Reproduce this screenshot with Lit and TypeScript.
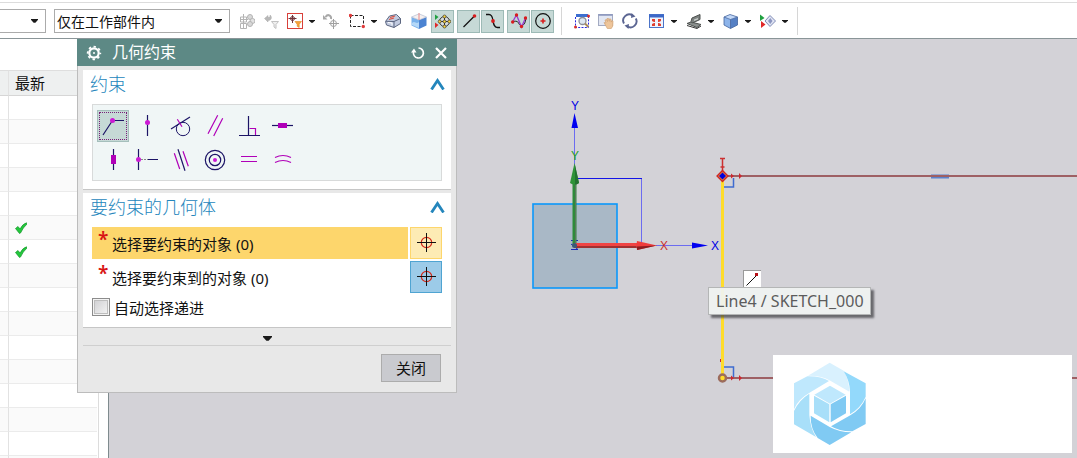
import { LitElement, html, svg, css, TemplateResult, SVGTemplateResult } from "lit";
import { customElement, property, state } from "lit/decorators.js";
import { classMap } from "lit/directives/class-map.js";

type Art = SVGTemplateResult;

const NAVY = "#1c1466";
const MAGENTA = "#b000b8";

/* ---------- toolbar glyphs, 16 x 16 ---------- */
const tools: Record<string, Art> = {
  moveComponent: svg`
    <g fill="none" stroke="#b4b4b4">
      <path d="M1 6.500h8M4.500 1v9M1.500 4v5h6V4zM1.500 10.500h6v5h-6zM4.500 10v5"/>
      <circle cx="11" cy="4" r="2.500" fill="#d8d8d8"/><circle cx="13.500" cy="8" r="2.500" fill="#e2e2e2"/><circle cx="11" cy="11" r="2.500" fill="#d8d8d8"/>
    </g>`,
  resetFilter: svg`
    <path d="M1.500 5.500 5 2.500v2c2 0 2.500-1 2-2.500 2.500 2 1.500 5.500-2 5.500v1.500z" fill="#b8b8b8" stroke="#a8a8a8" stroke-width=".5"/>
    <path d="M8.500 8.500h7l-2.500 3v4l-2-1.500v-2.500z" fill="#efefef" stroke="#c2c2c2"/>`,
  pointFilter: svg`
    <rect x=".5" y=".5" width="15" height="15" fill="#fff" stroke="#d9403a"/>
    <path d="M5.500 2v8M1.500 5.500h8" stroke="#70343a"/><circle cx="5.500" cy="5.500" r="2" fill="none" stroke="#70343a"/>
    <path d="M8 8.500h6.500l-2.300 2.700v3.300l-2-1.200v-2z" fill="#f6a33a" stroke="#e08a20" stroke-width=".6"/>`,
  undoSelect: svg`
    <path d="M2.500 4C5 .5 8.500 2.500 8 6" fill="none" stroke="#a8a8a8" stroke-width="2"/><path d="M0 2v4.500h4.500z" fill="#a8a8a8"/>
    <path d="M10.500 6v10M6 10.500h10" stroke="#a0a0a0"/><circle cx="10.500" cy="10.500" r="3" fill="none" stroke="#a0a0a0"/>`,
  marquee: svg`
    <rect x="1.500" y="2.500" width="13" height="11" fill="none" stroke="#222" stroke-dasharray="3 1.500"/>
    <circle cx="1.500" cy="2.500" r="1.700" fill="#e03a3a"/><circle cx="14.300" cy="13.500" r="1.700" fill="#e03a3a"/>`,
  highlightHidden: svg`
    <path d="M.5 8.500 4.500 3l7-1.500 4 4v5L9 14.500 1.500 12z" fill="#c2cbe0" stroke="#5c6680"/>
    <path d="M9 14.500v-6l6.500-3M9 8.500.8 8.300" fill="none" stroke="#5c6680"/>
    <path d="M5 4.500l5-1.500M4 6.500l5-1.500" stroke="#e0503c" stroke-width="1.200"/><path d="M3 9.500l4 .5v2.500" fill="none" stroke="#fff"/>`,
  solidBody: svg`
    <path d="M.5 4 8 7v9L.5 12.500z" fill="#78b2ec"/><path d="M8 7l7.500-3v8.500L8 16z" fill="#4b83d2"/>
    <path d="M.5 4 8 .8 15.500 4 8 7z" fill="#f5f0f0" stroke="#a7b4cc" stroke-width=".6"/><path d="M8 0v7" stroke="#e58a8a"/>
    <path d="M1 10c3-3 4 2 7-1v6L1 12z" fill="#b4d8f8"/>`,
  snapPoint: svg`
    <path d="M0 1.500 3.500 4 0 7z" fill="#20a040"/><path d="M0 9.500 3.500 12 0 15z" fill="#e02828"/>
    <circle cx="9.500" cy="8.500" r="5" fill="#d5dbd9" stroke="#404040"/>
    <path d="M9.500 3v11M4 8.500h11" stroke="#333"/>
    <g fill="#ffd83a" stroke="#333" stroke-width=".7"><circle cx="9.500" cy="3.500" r="1.500"/><circle cx="9.500" cy="13.500" r="1.500"/><circle cx="4.700" cy="8.500" r="1.500"/><circle cx="14.300" cy="8.500" r="1.500"/><circle cx="9.500" cy="8.500" r="1.500"/></g>`,
  endPoint: svg`<path d="M2.500 14 13 3.500" stroke="#111" stroke-width="1.300"/><circle cx="13.500" cy="3" r="1.800" fill="#d81e1e"/>`,
  controlPoint: svg`<path d="M1 1.500h3c3 0 3.500 2.500 4 6s1 7 4.500 7H15" fill="none" stroke="#111" stroke-width="1.300"/><circle cx="8" cy="8" r="1.900" fill="#d81e1e"/>`,
  splinePole: svg`
    <path d="M1 9c3-1 3-1 5-.5s2 5 5 4 3-3 4-7" fill="none" stroke="#222"/>
    <path d="M1.500 9 5.500 2l5 12L14.500 5" fill="none" stroke="#9a3ad0" stroke-width="1.300"/>
    <g fill="#d81e1e"><circle cx="1.700" cy="9" r="1.700"/><circle cx="5.500" cy="2" r="1.700"/><circle cx="10.500" cy="13.500" r="1.700"/><circle cx="14.500" cy="5" r="1.700"/></g>`,
  arcCenter: svg`<circle cx="8" cy="8" r="7.300" fill="none" stroke="#111" stroke-width="1.200"/><path d="M8 5.500v5M5.500 8h5" stroke="#d81e1e" stroke-width="1.600"/>`,
  zoomWindow: svg`
    <path d="M2 1h12v3H2z" fill="#3c6ed0"/><path d="M1.500 4v10.500h13V4" fill="#fff" stroke="#2828e0" stroke-dasharray="2 1.300"/>
    <circle cx="8.500" cy="8" r="3.500" fill="#dfe8f2" stroke="#8a8f98" stroke-width="1.300"/><path d="M11 10.500l3.500 3.500" stroke="#a88a5a" stroke-width="2"/>
    <circle cx="14.500" cy="3" r="1.500" fill="#d83030"/><circle cx="1.500" cy="14" r="1.500" fill="#d83030"/>`,
  pan: svg`
    <rect x=".5" y="1.500" width="14" height="11" fill="#e2e7f3" stroke="#a3aac2"/><path d="M.5 2h14" stroke="#8895bd" stroke-width="1.500"/>
    <path d="M6 9.500l2 .5-1-3 1.500-.5 1 2-.5-3h1.500l.8 2.800.2-2.500 1.400.3.3 3 .6-1.600 1.200.5-.2 5-1.500 2.500h-4z" fill="#eec59a" stroke="#cf9d6c" stroke-width=".6"/>`,
  rotate: svg`
    <path d="M2 10.500A6 6 0 0 1 10.500 2.500M13.800 5.500A6 6 0 0 1 5.500 13.500" fill="none" stroke="#5b6592" stroke-width="1.900"/>
    <path d="M9.500 0l4 3.500-4.500 1.500zM6.500 16l-4-3.500L7 11z" fill="#5b6592"/>`,
  fit: svg`
    <rect x=".5" y="1.500" width="14" height="13" fill="#eef3fd" stroke="#4c74c8"/><path d="M0 3h15" stroke="#3c68c8" stroke-width="3"/>
    <g fill="#e04030"><path d="M3 6h3v3H5L3 8zM9 6h3v2l-2 1H9zM3 13v-2l2-1h1v3zM12 13H9v-3h1l2 1z"/></g>`,
  section: svg`
    <path d="M1 10.500 5 9l10 2.500-4 3z" fill="#8b908e" stroke="#4c504e"/><path d="M5 8.500 6 5l8-3.500v5L6.500 10z" fill="#7d8280" stroke="#4c504e"/>
    <path d="M8 6.500l4-1.500v1.500L8 8z" fill="#c9cdcb"/><path d="M1 12.500l10 3 4-2.500" fill="none" stroke="#333"/>`,
  shaded: svg`
    <path d="M1 4l6.500 2.500v9L1 12z" fill="#8db4ea"/><path d="M7.500 6.500 14.500 4v8l-7 3.500z" fill="#5580c4"/>
    <path d="M1 4l6-2.500L14.500 4l-7 2.500z" fill="#c2d8f8"/><path d="M1 4l6-2.500L14.500 4v8l-7 3.500L1 12zM1 4l6.500 2.500v9M7.500 6.500 14.500 4" fill="none" stroke="#44649e" stroke-width=".8"/>`,
  showHide: svg`
    <path d="M0 1.500 4.500 5 0 8z" fill="#20a040"/><path d="M1 8l4.500 3.500L1 15z" fill="#e02828"/>
    <path d="M5 8l5-5.500L15.500 8 10 13.500z" fill="#e2e6f4" stroke="#7d88b4"/><path d="M8 8l2.300-3L12.500 8l-2.200 3z" fill="#8c96c0"/>`,
};

interface Tool { id: string; label: string; menu?: boolean; on?: boolean }

const selectionTools: Tool[][] = [
  [{ id: "moveComponent", label: "移动组件" }, { id: "resetFilter", label: "重置过滤器" }, { id: "pointFilter", label: "点过滤器", menu: true }],
  [{ id: "undoSelect", label: "恢复选择" }],
  [{ id: "marquee", label: "矩形选择", menu: true }],
  [{ id: "highlightHidden", label: "高亮显示隐藏边" }],
  [{ id: "solidBody", label: "实体" }],
];
const snapTools: Tool[][] = [
  [{ id: "snapPoint", label: "捕捉点", on: true }],
  [{ id: "endPoint", label: "端点", on: true }, { id: "controlPoint", label: "控制点", on: true }],
  [{ id: "splinePole", label: "极点", on: true }, { id: "arcCenter", label: "圆弧中心", on: true }],
];
const viewTools: Tool[][] = [
  [{ id: "zoomWindow", label: "缩放" }, { id: "pan", label: "平移" }, { id: "rotate", label: "旋转" }],
  [{ id: "fit", label: "适合窗口", menu: true }],
  [{ id: "section", label: "剖切", menu: true }],
  [{ id: "shaded", label: "带边着色", menu: true }],
  [{ id: "showHide", label: "显示和隐藏", menu: true }],
];

/* ---------- constraint glyphs, 32 x 32 ---------- */
const dot = (x: number, y: number) => svg`<circle cx=${x} cy=${y} r="2.500" fill="#cc1ad4"/>`;
const line = (d: string, stroke = NAVY) => svg`<path d=${d} fill="none" stroke=${stroke} stroke-width="1.200"/>`;

const constraints: { label: string; art: Art }[] = [
  { label: "重合", art: svg`${line("M6 25 15.500 10.500H27")}${dot(15.5, 10.5)}` },
  { label: "点在曲线上", art: svg`${line("M16.500 5V26")}${dot(16.5, 12.5)}` },
  { label: "相切", art: svg`<circle cx="18" cy="19" r="6.700" fill="none" stroke=${NAVY}/>${line("M6 19 25 7")}${line("M12.300 9.300 17 16.700", MAGENTA)}` },
  { label: "平行", art: svg`${line("M9 23.700 18.700 5.300M14.700 26 23.700 8.300", MAGENTA)}` },
  { label: "垂直", art: svg`${line("M16.500 18.500H22.500V25", MAGENTA)}${line("M15.500 6V25.500M6 25.500H27")}` },
  { label: "水平", art: svg`${line("M5 15.500H26")}<rect x="11" y="13" width="9" height="5" fill=${MAGENTA}/>` },
  { label: "竖直", art: svg`${line("M16.500 5V26")}<rect x="14" y="11" width="5" height="9" fill=${MAGENTA}/>` },
  { label: "中点", art: svg`${line("M7.500 5V26M17 15.500H27")}<path d="M10 15.500H17" stroke="#888" stroke-dasharray="2 1"/>${dot(7.5, 15.5)}` },
  { label: "共线", art: svg`${line("M9.300 9.300 14.700 25M18 7.300 23.300 22.300", MAGENTA)}${line("M13 5.300 20 26.700")}` },
  { label: "同心", art: svg`<g fill="none" stroke=${NAVY} stroke-width="1.200"><circle cx="16" cy="16" r="9.700"/><circle cx="16" cy="16" r="5.700"/></g><circle cx="16" cy="16" r="2" fill="#cc1ad4"/>` },
  { label: "等长", art: svg`${line("M8 12.500H24M8 17.500H24", MAGENTA)}` },
  { label: "等半径", art: svg`${line("M8 13.500Q16 9.500 24 13.500M8 18.500Q16 14.500 24 18.500", MAGENTA)}` },
];

const caret = (w = 7, h = 4) => html`<svg class="caret" width=${w} height=${h} viewBox="0 0 8 5" preserveAspectRatio="none" aria-hidden="true"><path d="M0 0h8v1L5 4.700H3L0 1z" fill="#1a1a1a"/></svg>`;

const base = css`
  * { box-sizing: border-box; }
  button, select, input { font: inherit; color: inherit; margin: 0; }
  button { padding: 0; border: 0; background: none; display: flex; align-items: center; justify-content: center; }
  svg { display: block; flex: none; }
`;

@customElement("tool-bar")
class ToolBar extends LitElement {
  static styles = [base, css`
    :host { box-sizing: border-box; display: flex; align-items: center; height: 39px; padding-top: 4px; background: #fff; border-bottom: 1px solid #8a9598; position: relative; overflow: hidden; }
    .top { position: absolute; left: 0; right: 0; top: 2px; height: 1px; background: #dcdcdc; }
    .combo { display: grid; align-items: center; height: 24px; flex: none; }
    .combo > * { grid-area: 1 / 1; }
    .combo .caret { justify-self: end; margin-right: 8px; pointer-events: none; }
    select { appearance: none; width: 100%; height: 24px; border: 1px solid #ababab; border-radius: 0; background: #fff; padding: 0 20px 0 2px; font-size: 14px; color: #111; }
    .cut { width: 46px; }
    .cut select { border-left: 0; }
    .scope { width: 176px; margin: 0 5px 0 8px; }
    .set { display: flex; gap: 2px; flex: none; }
    .view { gap: 3px; margin-left: 8px; }
    .snap { gap: 3px; }
    .group { display: flex; align-items: center; }
    .snap .group { gap: 1px; }
    .tool { width: 24px; height: 24px; }
    .on { width: 23px; height: 23px; background: #c6d9d6; border: 1px solid #9dbab6; }
    .menu { width: 10px; height: 24px; }
    .sep { width: 1px; height: 28px; background: #d6d6d6; margin-left: 7px; flex: none; }
  `];

  private tools(groups: Tool[][], kind: string) {
    return html`<div class="set ${kind}">${groups.map((g) => html`<div class="group">${g.map((t) => html`
      <button class=${classMap({ tool: true, on: !!t.on })} aria-label=${t.label} title=${t.label}>
        <svg width="16" height="16" viewBox="0 0 16 16" aria-hidden="true">${tools[t.id]}</svg>
      </button>${t.menu ? html`<button class="menu" aria-label="${t.label}选项">${caret(6, 3)}</button>` : ""}`)}</div>`)}</div>`;
  }

  render() {
    return html`
      <div class="top"></div>
      <div class="combo cut"><select aria-label="类型过滤器"><option></option></select>${caret()}</div>
      <div class="combo scope"><select aria-label="选择范围"><option>仅在工作部件内</option></select>${caret()}</div>
      ${this.tools(selectionTools, "select")}
      ${this.tools(snapTools, "snap")}
      <div class="sep"></div>
      ${this.tools(viewTools, "view")}
      <div class="sep"></div>`;
  }
}

@customElement("part-list")
class PartList extends LitElement {
  static styles = [base, css`
    :host { display: block; background: #fff; border-right: 1px solid #7f8b8e; padding: 31px 9px 0 0; overflow: hidden; }
    .frame { border-right: 1px solid #dcdcdc; padding-right: 1px; }
    table { border-collapse: separate; border-spacing: 0; width: 100%; table-layout: fixed; font-size: 15px; color: #111; }
    th, td { padding: 0; height: 24px; border-bottom: 1px solid #ebebeb; text-align: left; font-weight: 400; }
    th { height: 26px; background: #eef0f0; border-top: 1px solid #dedede; border-bottom-color: #d6d6d6; line-height: 24px; }
    .name { width: 9px; border-right: 1px solid #e2e2e2; }
    .fresh { padding-left: 6px; }
    tbody tr:nth-child(even) { background: #fafafa; }
  `];

  render() {
    return html`<div class="frame"><table>
      <thead><tr><th class="name"></th><th class="fresh">最新</th></tr></thead>
      <tbody>${Array.from({ length: 16 }, (_, i) => html`<tr><td class="name"></td><td class="fresh">${i === 5 || i === 6
        ? html`<svg width="12" height="12" viewBox="0 0 12 12" role="img" aria-label="最新"><path d="M.5 6.500 3 4.500 5 7Q7.500 2 11.500.8L12 2Q8 5.500 5.500 11L4.500 11.500Z" fill="#22c83c" stroke="#129426" stroke-width=".7"/></svg>` : ""}</td></tr>`)}
      </tbody></table></div>`;
  }
}

@customElement("sketch-view")
class SketchView extends LitElement {
  static styles = [base, css`
    :host { display: block; position: relative; background: #d3d2d7; overflow: hidden; }
    .scene { position: absolute; inset: 0; }
    .axis { font-size: 12px; text-anchor: middle; font-family: "Liberation Sans", sans-serif; }
    .hint { position: absolute; left: 634px; top: 231px; width: 18px; height: 18px; background: #fff; border: 1px solid #999; border-right: 0; border-bottom: 0; }
    .tip { position: absolute; left: 599px; top: 248px; height: 28px; line-height: 26px; padding: 0 6px 0 7px; white-space: nowrap; font-size: 16px; color: #5c5c5c; background: rgba(240, 243, 242, 0.93); border: 1px solid #b4b6b6; box-shadow: 3px 3px 2px rgba(60, 60, 64, 0.7); }
    .card { position: absolute; right: 5px; bottom: 5px; width: 299px; height: 98px; background: #fff; padding: 7px 20px; }
  `];

  /* Scene coordinates share the window's origin; the group shifts them under the toolbar and list. */
  render() {
    return html`
      <svg class="scene" width="100%" height="100%" aria-label="草图">
        <g transform="translate(-109 -39)">
          <rect x="533" y="204" width="84" height="84" fill="#a9b8c6" stroke="#0a98fa" stroke-width="1.600"/>
          <path d="M574.500 128V165M656 245.500H692M641.500 179V243" stroke="#6c6cf0" fill="none"/>
          <path d="M578 178.500H642" stroke="#1414e6"/>
          <path d="M574.500 113 578 128H571.500ZM708 245.500 692 248.500V242.500Z" fill="#0000f0"/>
          <path d="M571 240.500H578M571 249.500H578L571 244" stroke="#1a2ab8" fill="none"/>
          <path d="M572.500 183H576.500V246H572.500Z" fill="#2e8b3a"/><path d="M575.500 183V244" stroke="#587a5c"/>
          <path d="M574.500 163 579 183Q574.500 186 570 183Z" fill="#2e9338"/><path d="M575 165 579 183Q577 184.500 575 184.500Z" fill="#237330"/>
          <rect x="574" y="243" width="64" height="5" fill="#a03030"/><rect x="574" y="243" width="64" height="3" fill="#f04444"/>
          <path d="M657 245.500 637 250Q636 245.500 637 241Z" fill="#f03c3c"/><path d="M657 245.500 637 250V246.500Z" fill="#8c1c20"/>
          <circle cx="574.500" cy="245.500" r="2.500" fill="#3a5a78"/>
          <text class="axis" x="575" y="110" fill="#0000e6">Y</text>
          <text class="axis" x="575" y="160" fill="#28a028">Y</text>
          <text class="axis" x="664" y="250" fill="#cc3030">X</text>
          <text class="axis" x="715" y="250" fill="#0000e6">X</text>

          <path d="M722.500 158V171M720 158.500H725M720.500 167H724.500" stroke="#cc3030" stroke-width="1.500"/>
          <path d="M931 176.500H949" stroke="#5b82cc" stroke-width="4"/>
          <path d="M726 176H2400M726 378H2400" stroke="#9e6064" stroke-width="1.800"/>
          <g fill="#cc2830"><path d="M731 173.500 734 176 731 178.500ZM739 173 742 176 739 179ZM731 375.500 734 378 731 380.500ZM739 375 742 378 739 381Z"/><rect x="720" y="359" width="2" height="3"/></g>
          <path d="M733.500 178V187H724M724 367H733.500V377" fill="none" stroke="#3f6cd0" stroke-width="1.500"/>
          <path d="M722.500 180V378" stroke="#ffdc2a" stroke-width="3"/>
          <path d="M722.500 170.500 728 176 722.500 181.500 717 176Z" fill="#e8803c" stroke="#cc2424" stroke-width="1.300"/>
          <path d="M722.500 172.500 726 176 722.500 179.500 719 176Z" fill="#0000dc"/>
          <circle cx="722.500" cy="378" r="3.500" fill="#ffdc2a" stroke="#9c6c5c" stroke-width="2.500"/>
        </g>
      </svg>
      <div class="hint"><svg width="17" height="17" viewBox="0 0 17 17" aria-hidden="true"><path d="M2.500 14.500 12 5" stroke="#111"/><rect x="11" y="2" width="3" height="3" fill="#b81018"/></svg></div>
      <div class="tip" role="tooltip">Line4 / SKETCH_000</div>
      <div class="card">
        <svg width="74" height="84" viewBox="100 36 222 252" role="img" aria-label="徽标">
          <path d="M145 77 210 38 252 62Q268 90 269 125L212 92Q185 76 145 77Z" fill="#d9f1fe"/>
          <path d="M103 100 143 79Q185 78 208 93L152 127Q115 148 103 178Z" fill="#bfe8fd"/>
          <path d="M103 183Q118 150 149 131V195Q152 235 169 261L103 223Z" fill="#a8dff9"/>
          <path d="M153 197 210 231Q240 247 275 247L210 285 174 264Q152 235 153 197Z" fill="#80caf3"/>
          <path d="M214 229 272 196Q305 177 318 145V222L278 244Q240 245 214 229Z" fill="#80caf3"/>
          <path d="M252 64 318 100V140Q305 172 271 193V125Q270 92 252 64Z" fill="#93d9fb"/>
          <path d="M211 107 258 134 211 161 164 134Z" fill="#bfe8fd"/><path d="M163 137 209 163V217L163 190Z" fill="#a8dff9"/><path d="M259 137 213 163V217L259 190Z" fill="#80caf3"/>
        </svg>
      </div>`;
  }
}

@customElement("dialog-section")
class DialogSection extends LitElement {
  @property() heading = "";
  @state() private open = true;

  static styles = [base, css`
    :host { display: block; background: #fff; border-bottom: 1px solid #c6c6c6; }
    .head { display: flex; align-items: center; justify-content: space-between; height: 28px; padding: 0 6px 0 7px; }
    h2 { margin: 0; font-size: 18px; font-weight: 300; line-height: 28px; color: #2486bc; }
    .body { padding: 6px 9px 8px; }
  `];

  render() {
    return html`
      <div class="head"><h2>${this.heading}</h2>
        <button aria-label="折叠${this.heading}" aria-expanded=${this.open ? "true" : "false"} @click=${() => (this.open = !this.open)}>
          <svg width="15" height="12" viewBox="0 0 15 12" aria-hidden="true"><path d="M1.500 11.500 7.500 2.500 13.500 11.500" fill="none" stroke="#2486bc" stroke-width="2.800"/></svg>
        </button></div>
      ${this.open ? html`<div class="body"><slot></slot></div>` : ""}`;
  }
}

@customElement("constraint-dialog")
class ConstraintDialog extends LitElement {
  @state() private picked = 0;

  static styles = [base, css`
    :host { display: block; width: 380px; background: #e8e8e8; color: #111; font-size: 15px; }
    .title { display: flex; align-items: center; height: 27px; padding: 0 10px 0 9px; background: #5d8985; color: #fff; }
    h1 { flex: 1; margin: 0 0 0 10px; font-size: 16px; font-weight: 400; line-height: 27px; }
    .title button + button { margin-left: 10px; }
    .inner { display: flex; flex-direction: column; gap: 3px; padding: 4px 5px 10px; border: 1px solid #bcbcbc; border-top: 0; }
    .palette { display: grid; grid-template-columns: repeat(6, 32px); gap: 2px; padding: 5px 4px 4px; background: #f0f6f6; border: 1px solid #d8dada; }
    .kind { width: 32px; height: 32px; }
    .picked { background: #c6d9d6; outline: 1px dotted #782078; outline-offset: -3px; box-shadow: inset 0 0 0 1px #a5bfbc; }
    .row { display: flex; gap: 2px; margin-bottom: 2px; }
    .pick { flex: 1; display: flex; align-items: center; height: 32px; padding-left: 6px; justify-content: flex-start; text-align: left; }
    .star { width: 14px; font-size: 19px; line-height: 20px; padding-bottom: 8px; color: #d81414; font-weight: 600; }
    .active { background: #fdd66c; }
    .point { width: 32px; height: 32px; background: #9ccbe8; border: 1px solid #4fa4d2; }
    .active + .point { background: #fdebb4; border-color: #fdd66c; }
    .auto { display: flex; align-items: center; gap: 4px; height: 24px; }
    input { appearance: none; width: 18px; height: 18px; border: 1px solid #8c8c8c; background: linear-gradient(135deg, #cdcdd0, #f6f6f6); box-shadow: inset 0 0 0 1px #f4f4f4, inset 0 0 0 2px #bdbdbd; }
    .more { height: 14px; width: 100%; }
    .foot { display: flex; justify-content: flex-end; padding: 8px 10px 0 0; border-top: 1px solid #cfcfcf; }
    .close { width: 60px; height: 28px; padding-bottom: 2px; background: #c9cacf; border: 1px solid #acacac; }
  `];

  private row(text: string, active: boolean) {
    return html`<div class="row">
      <button class=${classMap({ pick: true, active })}><span class="star">*</span><span>${text}</span></button>
      <button class="point" aria-label="点构造器"><svg width="20" height="20" viewBox="0 0 20 20" aria-hidden="true"><circle cx="10.500" cy="9.500" r="5.200" fill="none" stroke="#d42a1a" stroke-width="1.200"/><path d="M10.500 0V19M1 9.500H20" stroke="#111"/></svg></button>
    </div>`;
  }

  render(): TemplateResult {
    return html`
      <div class="title">
        <svg width="16" height="16" viewBox="0 0 16 16" aria-hidden="true"><g fill="none" stroke="#fff"><circle cx="8" cy="8" r="4.700" stroke-width="2.200"/><circle cx="8" cy="8" r="6.300" stroke-width="1.800" stroke-dasharray="2.400 2.548" stroke-dashoffset="1.200"/></g><circle cx="8" cy="8" r="1" fill="#fff"/></svg>
        <h1>几何约束</h1>
        <button aria-label="重置"><svg width="14" height="14" viewBox="0 0 14 14" aria-hidden="true"><path d="M7.500 2A5 5 0 1 1 2.500 6" fill="none" stroke="#fff" stroke-width="1.700"/><path d="M0 6.500 3 2.500 5.500 6.500Z" fill="#fff"/></svg></button>
        <button aria-label="关闭对话框"><svg width="12" height="12" viewBox="0 0 12 12" aria-hidden="true"><path d="M1 1 11 11M11 1 1 11" stroke="#fff" stroke-width="2.200"/></svg></button>
      </div>
      <div class="inner">
        <dialog-section heading="约束">
          <div class="palette">${constraints.map((c, i) => html`
            <button class=${classMap({ kind: true, picked: i === this.picked })} aria-label=${c.label} @click=${() => (this.picked = i)}>
              <svg width="32" height="32" viewBox="0 0 32 32" aria-hidden="true">${c.art}</svg></button>`)}</div>
        </dialog-section>
        <dialog-section heading="要约束的几何体">
          ${this.row("选择要约束的对象 (0)", true)}
          ${this.row("选择要约束到的对象 (0)", false)}
          <div class="auto"><input type="checkbox" id="auto"><label for="auto">自动选择递进</label></div>
        </dialog-section>
        <div>
          <button class="more" aria-label="更多">${caret(9, 5)}</button>
          <div class="foot"><button class="close">关闭</button></div>
        </div>
      </div>`;
  }
}

@customElement("app-root")
class AppRoot extends LitElement {
  static styles = css`
    :host { display: flex; flex-direction: column; height: 100vh; overflow: hidden; font-family: "Noto Sans", "Noto Sans CJK SC", sans-serif; font-size: 15px; }
    tool-bar { flex: none; }
    .work { flex: 1; min-height: 0; display: flex; position: relative; }
    part-list { flex: none; width: 109px; box-sizing: border-box; }
    sketch-view { flex: 1; }
    constraint-dialog { position: absolute; left: 77px; top: 0; }
  `;

  render() {
    return html`<tool-bar></tool-bar>
      <div class="work"><part-list></part-list><sketch-view></sketch-view><constraint-dialog></constraint-dialog></div>`;
  }
}
